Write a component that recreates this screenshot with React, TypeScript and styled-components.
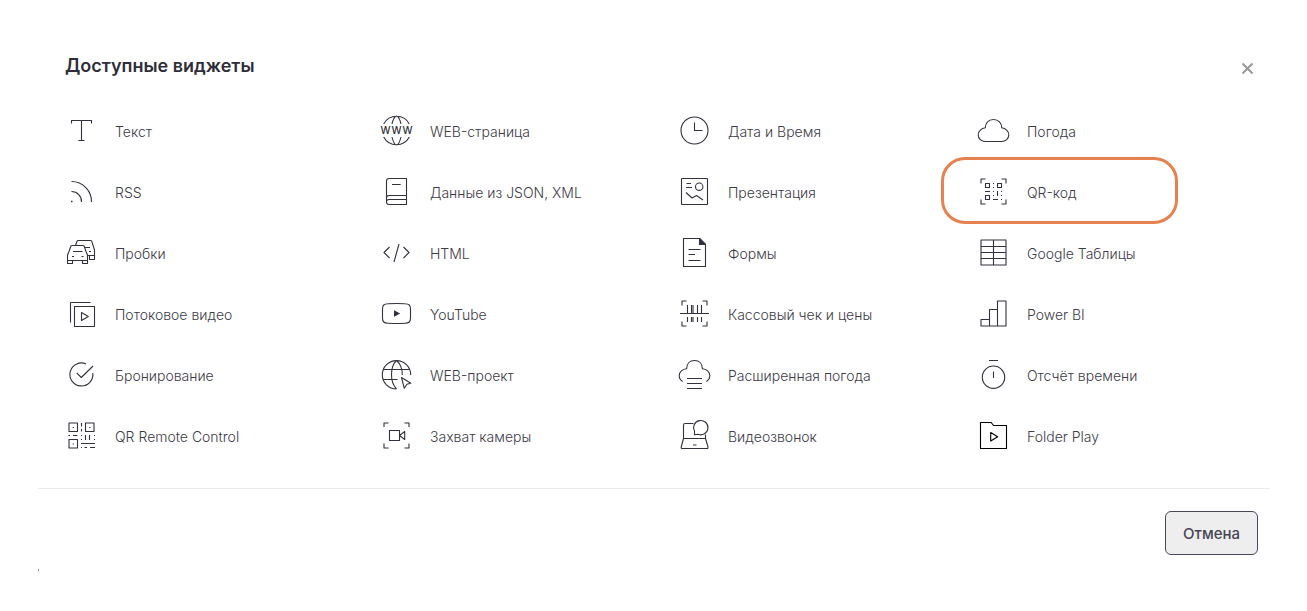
import React from "react";
import styled, { createGlobalStyle } from "styled-components";

const GlobalStyle = createGlobalStyle`
  *, *::before, *::after { box-sizing: border-box; }
  body {
    margin: 0;
    background: #ffffff;
    color: #3d3b48;
    font-family: Inter, "Open Sans", sans-serif;
  }
`;

const Dialog = styled.section`
  margin: 0 37px 0 38px;
  padding-top: 48px;
`;

const Header = styled.header`
  display: flex;
  align-items: center;
  justify-content: space-between;
  height: 36px;
  padding: 0 12px 0 27px;
`;

const Title = styled.h1`
  margin: 0;
  font-size: 18px;
  line-height: 24px;
  font-weight: 600;
  color: #2f2e38;
`;

const CloseButton = styled.button`
  display: flex;
  align-items: center;
  justify-content: center;
  width: 21px;
  height: 21px;
  margin-top: 5px;
  padding: 0;
  border: 0;
  background: none;
  color: #98989c;
  cursor: pointer;
`;

const WidgetGrid = styled.ul`
  display: grid;
  grid-template-columns: 315fr 298fr 299fr 293fr;
  grid-auto-rows: 61px;
  margin: 0;
  padding: 16px 0 22px 27px;
  list-style: none;
`;

const WidgetCell = styled.li`
  position: relative;
  display: flex;
`;

const WidgetButton = styled.button`
  display: flex;
  align-items: center;
  gap: 17px;
  padding: 0;
  border: 0;
  background: none;
  font: inherit;
  font-size: 14px;
  line-height: 20px;
  font-weight: 300;
  color: inherit;
  white-space: nowrap;
  cursor: pointer;
`;

const WidgetLabel = styled.span`
  padding-top: 2px;
`;

const Highlight = styled.span`
  position: absolute;
  top: -4px;
  bottom: -2px;
  left: -36px;
  width: 237px;
  border: 3px solid #e88150;
  border-radius: 24px;
  pointer-events: none;
`;

const Glyph = styled.svg<{ $dark?: boolean }>`
  flex: none;
  width: 33px;
  height: 33px;
  overflow: visible;
  fill: none;
  stroke: ${(p) => (p.$dark ? "#000000" : "#33313d")};
  stroke-width: 1.1;
  stroke-linejoin: round;

  .solid { fill: #33313d; }
  text {
    fill: #33313d;
    stroke: none;
    font: 500 10px Inter, sans-serif;
  }
`;

const Footer = styled.footer`
  display: flex;
  justify-content: flex-end;
  padding: 22px 12px 0 0;
  border-top: 1px solid #ebebed;
`;

const CancelButton = styled.button`
  height: 44px;
  padding: 2px 17px 0;
  border: 1px solid #4a4758;
  border-radius: 6px;
  background: #eeeeee;
  font: inherit;
  font-size: 15px;
  line-height: 20px;
  font-weight: 500;
  color: #474454;
  cursor: pointer;
`;

const Speck = styled.div`
  width: 1px;
  height: 2px;
  margin-top: 14px;
  background: #8e8e94;
`;

type Widget = { label: string; icon: React.ReactNode; dark?: boolean; highlighted?: boolean };

const widgets: Widget[] = [
  { label: "Текст", icon: <path d="M6.5 9.5V6.5H26.5V9.5M16.5 6.5V26.5M13.5 26.5H19.5" /> },
  {
    label: "WEB-страница",
    icon: (
      <>
        <path d="M3.7 10A14.5 14.5 0 0 1 29.3 10M3.7 23A14.5 14.5 0 0 0 29.3 23M12 10C12.8 6.5 14.5 2.5 16.5 2C18.5 2.5 20.2 6.5 21 10M12 23C12.8 26.5 14.5 30.5 16.5 31C18.5 30.5 20.2 26.5 21 23" />
        <text x="5.5 16.5 27.5" y="20" textAnchor="middle">WWW</text>
      </>
    ),
  },
  { label: "Дата и Время", icon: <><circle cx="16.5" cy="16.5" r="13.5" /><path d="M16.5 8.5V16.5H24.5" /></> },
  { label: "Погода", icon: <path d="M8.5 27.5H24.5C28.7 27.5 31.8 24.6 31.8 20.8C31.8 17.2 28.5 14.2 24.7 13.8C24.7 9 21.5 5.5 16.5 5.5C11.5 5.5 8.3 9 8.3 13.8C4.5 14.2 1.2 17.2 1.2 20.8C1.2 24.6 4.3 27.5 8.5 27.5Z" /> },
  { label: "RSS", icon: <><path d="M6.5 6.5A20 20 0 0 1 26.5 27M6.5 16.5A10 10 0 0 1 16.5 27" /><path d="M6 26.5H7.5" strokeWidth="1.5" /></> },
  {
    label: "Данные из JSON, XML",
    icon: <path d="M9 29.5H26.5V3.5H9Q6.5 3.5 6.5 6V27Q6.5 29.5 9 29.5ZM12 9.5H20.7M26.5 20.5H9Q6.5 20.5 6.5 23M26.5 24.5H9Q6.5 24.5 6.5 27" />,
  },
  {
    label: "Презентация",
    icon: <><rect x="3.5" y="3.5" width="26" height="26" rx="0.5" /><path d="M8.5 8.5H13M8 12.5H14M8 17.5L14 23L18.5 20.5L25 25" /><circle cx="21.2" cy="11.7" r="3.7" /></>,
  },
  {
    label: "QR-код",
    highlighted: true,
    icon: (
      <>
        <path d="M4 8.5V4H8.5M24.5 4H29V8.5M29 24.5V29H24.5M8.5 29H4V24.5" />
        <path d="M8.5 8.5H12.5V12.5H8.5ZM20.5 8.5H24.5V12.5H20.5ZM8.5 20.5H12.5V24.5H8.5Z" />
        <path d="M16 8.5H17M16 12.5H17M8 16.5H13M16 16.5H17M20.5 16V21M24 16.5H25M24 20.5H25M24 24.5H25M16 20.5H17M16 24.5H21" />
      </>
    ),
  },
  {
    label: "Пробки",
    icon: (
      <>
        <path d="M2.5 24.5V19L4 15.5L5.8 10.2Q6.2 9.5 7 9.5H18Q18.8 9.5 19.2 10.2L21 15.5L22.5 19V24.5ZM2.5 24.5V27.5H7.5V24.5M17.5 24.5V27.5H22.5V24.5M8 15.5H17.5M7 20.5H9M16.5 20.5H18.5" />
        <path d="M10.5 9.5L12 5.3Q12.4 4.5 13.2 4.5H25.5Q26.4 4.5 26.8 5.3L28.6 11L29.5 14V22.5M19.5 11.5H25M24 15.5H26M22.5 19.5H29.5M24.5 19.5V23.5H29.5V19.5" />
      </>
    ),
  },
  { label: "HTML", icon: <path d="M9.5 11L4 16.5L9.5 22M19 8L14 26M23.5 11L29 16.5L23.5 22" /> },
  {
    label: "Формы",
    icon: <><path d="M5.5 2.5H21.5L27.5 8.5V30.5H5.5ZM10.5 13.5H22.5M10.5 18.5H17M10.5 24.5H22.5" /><path className="solid" d="M21.5 2.5L27.5 8.5H21.5Z" /></>,
  },
  { label: "Google Таблицы", icon: <path d="M4 4H29V29H4ZM16.5 4V29M4 10.5H29M4 16.5H29M4 22.5H29" /> },
  { label: "Потоковое видео", icon: <path d="M5.5 25.5V5.5H25.5M9.5 9.5H29.5V29.5H9.5ZM16.5 15.5V23.5L23.3 19.5Z" /> },
  {
    label: "YouTube",
    icon: <><path d="M2.5 12C2.5 8 4 7 8 6.8C13 6.4 20 6.4 25 6.8C29 7 30.5 8 30.5 12V21C30.5 25 29 26 25 26.2C20 26.6 13 26.6 8 26.2C4 26 2.5 25 2.5 21Z" /><path className="solid" stroke="none" d="M14 13.2V19.8L20.2 16.5Z" /></>,
  },
  {
    label: "Кассовый чек и цены",
    icon: (
      <>
        <path d="M4 8.5V4H8.5M24.5 4H29V8.5M29 24.5V29H24.5M8.5 29H4V24.5M2 16.5H31" />
        <path d="M9.5 8V16M13.5 8V16M15 8V16M19.5 8V16M23.5 8V16M9.5 20V25M13.5 20V25M15 20V25M19.5 20V25M23.5 20V25" />
      </>
    ),
  },
  { label: "Power BI", icon: <path d="M4 29V22.5H12.5V12.5H20.5V4H29V29ZM12.5 22.5V29M20.5 12.5V29" /> },
  { label: "Бронирование", icon: <path d="M21 5.9A11.5 11.5 0 1 0 27.8 15M11.7 14.8L16.3 19.5L28 8" /> },
  {
    label: "WEB-проект",
    icon: <path d="M16.5 31A14.2 14.2 0 1 1 30.7 17M16.5 2.5C9.8 9 9.8 24 16.5 31M16.5 2.5C20.5 6 22.5 11 22.3 17M3 11.5H30M3 21.5H17.5M21.5 19.5L30.8 25.2L26.8 26.3L24.3 30.3Z" />,
  },
  {
    label: "Расширенная погода",
    icon: <path d="M4.7 23.5C2.3 22.2 1.2 20.2 1.2 17.5C1.2 13.8 4.6 11 8.6 10.7C8.6 5.8 11.6 2.5 16.5 2.5C21.4 2.5 24.4 5.8 24.4 10.7C28.4 11 31.8 13.8 31.8 17.5C31.8 20.2 30.7 22.2 28.3 23.5M9 20.5H24M9 25.5H24M9 30.5H24" />,
  },
  { label: "Отсчёт времени", icon: <><circle cx="16.5" cy="19.2" r="11.2" /><path d="M12 2.5H21M16.5 13.5V20" /></> },
  {
    label: "QR Remote Control",
    icon: (
      <>
        <path d="M4 4H12.5V12.5H4ZM20.5 4H29V12.5H20.5ZM4 20.5H12.5V29H4Z" />
        <path d="M7.7 8.5H8.9M24.2 8.5H25.4M7.7 25H8.9M16.5 4V7.5M16.5 10V12.5M3.5 16.5H5M8 16.5H12.5M16 16.5H17M20.5 16V21M24.5 16V21M29 16.5H30M16 20.5H17M29 20.5H30M16 24.5H30M16 28.5H17M19.5 28.5H22M25 28.5H30" />
      </>
    ),
  },
  {
    label: "Захват камеры",
    icon: <path d="M4 8V4H8.5M24.5 4H29V8M29 24.5V29H24.5M8.5 29H4V24.5M9.5 11.5H19.5V21.5H9.5ZM19.5 16.5L24.7 12.5V20.5Z" />,
  },
  {
    label: "Видеозвонок",
    icon: (
      <>
        <path d="M15.5 4.5H7Q5.5 4.5 5.5 6V19.5L3.2 28Q3 29.5 4.2 29.5H29Q30.3 29.5 30 28L27.5 19.5V15.5M5.5 19.5H27.5M15 26H18.5" />
        <path d="M16.5 15.8V12.2A7.2 7.2 0 1 1 20 15.3Z" />
      </>
    ),
  },
  {
    label: "Folder Play",
    dark: true,
    icon: <path d="M3.5 3.5H14.2L16.5 6.5H29.5V29.5H3.5ZM13.7 13.5V22L20.7 17.7Z" />,
  },
];

export default function App() {
  return (
    <>
      <GlobalStyle />
      <Dialog role="dialog" aria-labelledby="widgets-title">
        <Header>
          <Title id="widgets-title">Доступные виджеты</Title>
          <CloseButton type="button" aria-label="Закрыть">
            <svg width="11" height="11" viewBox="0 0 11 11" stroke="currentColor" strokeWidth="2" aria-hidden="true">
              <path d="M0.5 0.5L10.5 10.5M10.5 0.5L0.5 10.5" />
            </svg>
          </CloseButton>
        </Header>
        <WidgetGrid>
          {widgets.map((w) => (
            <WidgetCell key={w.label}>
              <WidgetButton type="button">
                <Glyph viewBox="0 0 33 33" $dark={w.dark} aria-hidden="true">{w.icon}</Glyph>
                <WidgetLabel>{w.label}</WidgetLabel>
              </WidgetButton>
              {w.highlighted && <Highlight />}
            </WidgetCell>
          ))}
        </WidgetGrid>
        <Footer>
          <CancelButton type="button">Отмена</CancelButton>
        </Footer>
        <Speck />
      </Dialog>
    </>
  );
}
